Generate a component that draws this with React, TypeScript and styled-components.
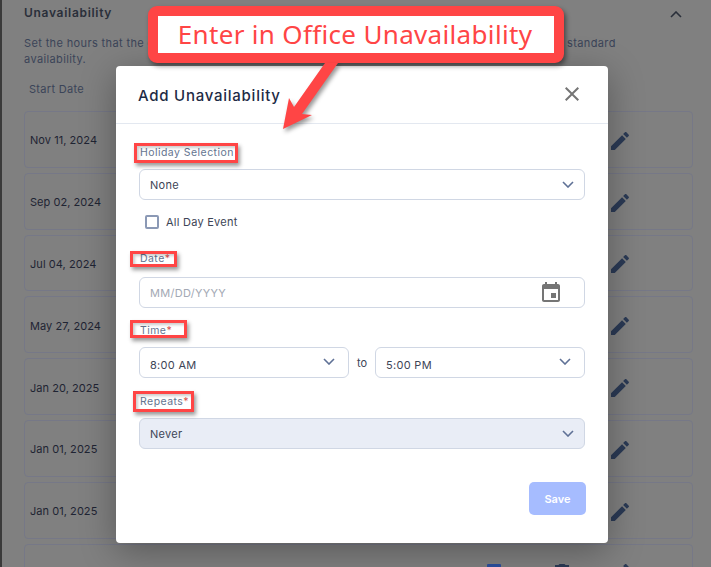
import React from 'react';
import styled, { createGlobalStyle } from 'styled-components';

const GlobalStyle = createGlobalStyle`
  html, body {
    margin: 0;
    padding: 0;
    width: 711px;
    height: 567px;
    overflow: hidden;
    background: #808080;
    font-family: Inter, "Liberation Sans", sans-serif;
  }
`;

const EDIT =
  'M3 17.25V21h3.75L17.81 9.94l-3.75-3.75L3 17.25zM20.71 7.04c.39-.39.39-1.02 0-1.41l-2.34-2.34c-.39-.39-1.02-.39-1.41 0l-1.83 1.83 3.75 3.75 1.83-1.83z';
const DOC = 'M6 3h12a1 1 0 0 1 1 1v16a1 1 0 0 1-1 1H6a1 1 0 0 1-1-1V4a1 1 0 0 1 1-1z';
const TRASH =
  'M6 19c0 1.1.9 2 2 2h8c1.1 0 2-.9 2-2V7H6v12zM19 4h-3.5l-1-1h-5l-1 1H5v2h14V4z';
const EVENT =
  'M17 12h-5v5h5v-5zM16 1v2H8V1H6v2H5c-1.11 0-1.99.9-1.99 2L3 19c0 1.1.89 2 2 2h14c1.1 0 2-.9 2-2V5c0-1.1-.9-2-2-2h-1V1h-2zm3 18H5V8h14v11z';
const CLOSE =
  'M19 6.41L17.59 5 12 10.59 6.41 5 5 6.41 10.59 12 5 17.59 6.41 19 12 13.41 17.59 19 19 17.59 13.41 12z';

// the last row runs off the bottom of the window before its date shows
const DATES = ['Nov 11, 2024', 'Sep 02, 2024', 'Jul 04, 2024', 'May 27, 2024', 'Jan 20, 2025', 'Jan 01, 2025', 'Jan 01, 2025', ''];

function Icon({ d, color }: { d: string; color: string }) {
  return (
    <svg width="24" height="24" viewBox="0 0 24 24" fill={color}>
      <path d={d} />
    </svg>
  );
}

function Chevron({ color = '#5f7196' }: { color?: string }) {
  return (
    <svg width="12" height="7" viewBox="0 0 12 7" fill="none" stroke={color} strokeWidth="1.6">
      <path d="M1 1l5 5 5-5" />
    </svg>
  );
}

export default function App() {
  return (
    <Page>
      <GlobalStyle />
      <SectionHead>
        <SectionTitle>Unavailability</SectionTitle>
        <CollapseChevron>
          <Chevron color="#2a2f3a" />
        </CollapseChevron>
      </SectionHead>
      <Description>
        Set the hours that the office will be closed to patients on holidays. These hours will override your standard availability.
      </Description>
      <ColumnTitle>Start Date</ColumnTitle>
      <Rows>
        {DATES.map((date, i) => (
          <Row key={i}>
            <DateText>{date}</DateText>
            <RowIcons>
              <Icon d={DOC} color="#2b4f9e" />
              <TrashSlot>
                <Icon d={TRASH} color="#2b3a55" />
              </TrashSlot>
              <Icon d={EDIT} color="#2b3a55" />
            </RowIcons>
          </Row>
        ))}
      </Rows>

      <Modal>
        <ModalHeader>
          <ModalTitle>Add Unavailability</ModalTitle>
          <CloseSlot>
            <Icon d={CLOSE} color="#757575" />
          </CloseSlot>
        </ModalHeader>
        <ModalBody>
          <Label>Holiday Selection</Label>
          <Select>
            <span>None</span>
            <Chevron />
          </Select>
          <CheckRow>
            <CheckBox />
            <CheckLabel>All Day Event</CheckLabel>
          </CheckRow>
          <Label $top={19} $bottom={12}>
            Date<Req>*</Req>
          </Label>
          <Select $muted>
            <span>MM/DD/YYYY</span>
            <CalendarSlot>
              <Icon d={EVENT} color="#757575" />
            </CalendarSlot>
          </Select>
          <Label $top={15}>
            Time<Req>*</Req>
          </Label>
          <TimeRow>
            <Select $narrow>
              <span>8:00 AM</span>
              <Chevron />
            </Select>
            <ToText>to</ToText>
            <Select $narrow>
              <span>5:00 PM</span>
              <Chevron />
            </Select>
          </TimeRow>
          <Label $top={16}>
            Repeats<Req>*</Req>
          </Label>
          <Select $filled>
            <span>Never</span>
            <Chevron />
          </Select>
          <Footer>
            <SaveButton>Save</SaveButton>
          </Footer>
        </ModalBody>
      </Modal>

      <Callout>
        <CalloutText>Enter in Office Unavailability</CalloutText>
      </Callout>
      <Arrow width="80" height="80" viewBox="0 0 80 80">
        <path d="M3 69L9 38L14 47L45 3L58 3L22 54L32 55Z" fill="#ff4545" />
      </Arrow>
      <Highlight $x={134} $y={143} $w={104} $h={20} />
      <Highlight $x={130} $y={251} $w={47} $h={16} />
      <Highlight $x={130} $y={320} $w={57} $h={18} />
      <Highlight $x={133} $y={391} $w={61} $h={21} />
    </Page>
  );
}

const Page = styled.div`
  position: relative;
  width: 711px;
  height: 567px;
  box-sizing: border-box;
  overflow: hidden;
  padding: 0 18px 0 24px;
  border-left: 2px solid #3a3a3a;
  background: #808080;
  color: #2a3040;
`;
const SectionHead = styled.div`
  display: flex;
  justify-content: space-between;
  align-items: center;
  height: 24px;
  margin-left: -2px;
`;
const SectionTitle = styled.div`
  font-size: 12px;
  font-weight: 600;
  letter-spacing: 0.7px;
  color: #2a2f3a;
`;
const CollapseChevron = styled.span`
  display: flex;
  margin: 4px 11px 0 0;
  transform: rotate(180deg);
`;
const Description = styled.div`
  width: 595px;
  margin: 11px 0 0 -2px;
  font-size: 11px;
  line-height: 16px;
  letter-spacing: 0.37px;
  color: #3b4458;
`;
const ColumnTitle = styled.div`
  margin: 15px 0 0 3px;
  font-size: 11px;
  line-height: 14px;
  letter-spacing: 0.3px;
  color: #3b4458;
`;
const Rows = styled.div`
  display: flex;
  flex-direction: column;
  gap: 5px;
  margin: 15px 0 0 -2px;
`;
const Row = styled.div`
  flex: none;
  box-sizing: border-box;
  height: 56.8px;
  display: flex;
  justify-content: space-between;
  align-items: center;
  padding: 0 60px 0 5px;
  border: 1px solid #767887;
  border-radius: 4px;
`;
const DateText = styled.div`
  margin-top: 2px;
  font-size: 11px;
  letter-spacing: 0.05px;
  color: #1f2433;
`;
const RowIcons = styled.div`
  display: flex;
  margin-top: 3px;
`;
const TrashSlot = styled.span`
  display: flex;
  margin: 0 34px 0 44px;
`;
const Modal = styled.div`
  position: absolute;
  left: 114px;
  top: 66px;
  width: 492px;
  height: 477px;
  border-radius: 4px;
  background: #fff;
  box-shadow: 0 8px 36px rgba(0, 0, 0, 0.32);
`;
const ModalHeader = styled.div`
  box-sizing: border-box;
  height: 58px;
  display: flex;
  justify-content: space-between;
  align-items: center;
  padding: 0 24px 0 22px;
  border-bottom: 1px solid #e3e8f0;
`;
const ModalTitle = styled.div`
  margin-top: 1px;
  font-size: 15px;
  font-weight: 500;
  letter-spacing: 0.75px;
  color: #1e2b45;
`;
const CloseSlot = styled.span`
  display: flex;
  margin-top: -2px;
`;
const ModalBody = styled.div`
  padding: 21px 23px 0;
`;
const Label = styled.div<{ $top?: number; $bottom?: number }>`
  height: 14px;
  margin: ${p => p.$top ?? 0}px 0 ${p => p.$bottom ?? 10}px 1px;
  font-size: 10.5px;
  line-height: 16px;
  letter-spacing: 0.45px;
  color: #64748f;
`;
const Req = styled.span`
  color: #d9534f;
`;
const Select = styled.div<{ $muted?: boolean; $filled?: boolean; $narrow?: boolean }>`
  box-sizing: border-box;
  height: 31px;
  flex: 1;
  display: flex;
  justify-content: space-between;
  align-items: ${p => (p.$narrow ? 'flex-start' : 'center')};
  padding: ${p => (p.$narrow ? '10px 13px 0 10px' : '0 10px')};
  border: 1px solid #d0d7e4;
  border-radius: 6px;
  background: ${p => (p.$filled ? '#e9edf6' : '#fff')};
  font-size: 11px;
  line-height: 14px;
  letter-spacing: 0.3px;
  color: ${p => (p.$muted ? '#a3a9b4' : '#3d4556')};
`;
const CalendarSlot = styled.span`
  display: flex;
  margin-right: 11px;
`;
const CheckRow = styled.div`
  display: flex;
  align-items: center;
  gap: 7px;
  height: 20px;
  margin: 12px 0 0 6px;
`;
const CheckBox = styled.span`
  box-sizing: border-box;
  width: 14px;
  height: 14px;
  border: 2px solid #8b99b5;
  border-radius: 2px;
`;
const CheckLabel = styled.span`
  font-size: 11px;
  letter-spacing: 0.25px;
  color: #3d4556;
`;
const TimeRow = styled.div`
  display: flex;
  align-items: center;
`;
const ToText = styled.span`
  width: 26px;
  text-align: center;
  font-size: 11px;
  color: #3d4556;
`;
const Footer = styled.div`
  display: flex;
  justify-content: flex-end;
  margin: 33px -1px 0 0;
`;
const SaveButton = styled.div`
  width: 57px;
  height: 33px;
  display: flex;
  align-items: center;
  justify-content: center;
  border-radius: 5px;
  background: #a6bcff;
  color: #fff;
  font-size: 11px;
  font-weight: 600;
`;
const Callout = styled.div`
  position: absolute;
  left: 146px;
  top: 6px;
  width: 416px;
  height: 57px;
  box-sizing: border-box;
  display: flex;
  align-items: center;
  justify-content: center;
  border: 10px solid #ff4545;
  border-radius: 9px;
  background: #fff;
  box-shadow: 2px 3px 5px rgba(0, 0, 0, 0.45);
`;
const CalloutText = styled.div`
  margin: -2px 2px 0 0;
  font-family: "Noto Sans", sans-serif;
  font-size: 26px;
  letter-spacing: 0.33px;
  color: #ff4545;
  white-space: nowrap;
`;
const Arrow = styled.svg`
  position: absolute;
  left: 278px;
  top: 60px;
  filter: drop-shadow(2px 3px 2px rgba(0, 0, 0, 0.4));
`;
const Highlight = styled.div<{ $x: number; $y: number; $w: number; $h: number }>`
  position: absolute;
  left: ${p => p.$x - 2}px;
  top: ${p => p.$y}px;
  width: ${p => p.$w}px;
  height: ${p => p.$h}px;
  box-sizing: border-box;
  border: 3px solid #ff4545;
  box-shadow: 2px 3px 4px rgba(0, 0, 0, 0.4), inset 2px 2px 3px rgba(0, 0, 0, 0.2);
`;
